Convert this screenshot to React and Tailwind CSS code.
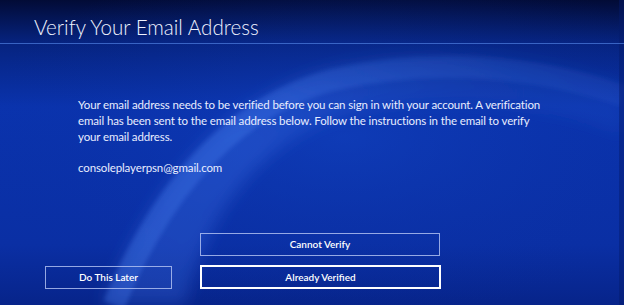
export default function App() {
  return (
    <div className="relative w-[624px] h-[305px] overflow-hidden bg-[#0a2c9e] text-white font-['Lato',_'Liberation_Sans',_sans-serif]">
      <svg className="absolute inset-0 w-full h-full" viewBox="0 0 624 305" preserveAspectRatio="none">
        <defs>
          <linearGradient id="bg" x1="0" y1="0" x2="0" y2="1">
            <stop offset="0" stopColor="#020b36" />
            <stop offset="0.14" stopColor="#06237f" />
            <stop offset="0.35" stopColor="#0a33ad" />
            <stop offset="0.8" stopColor="#0a2fa4" />
            <stop offset="1" stopColor="#07248a" />
          </linearGradient>
          <radialGradient id="glow" cx="0.55" cy="0.45" r="0.6">
            <stop offset="0" stopColor="#1446c4" stopOpacity="0.45" />
            <stop offset="1" stopColor="#0a2c9e" stopOpacity="0" />
          </radialGradient>
          <linearGradient id="band" x1="0" y1="1" x2="1" y2="0">
            <stop offset="0" stopColor="#3f75ea" stopOpacity="0.28" />
            <stop offset="0.45" stopColor="#3d72ea" stopOpacity="0.34" />
            <stop offset="1" stopColor="#3a6fe0" stopOpacity="0.05" />
          </linearGradient>
          <linearGradient id="strip" x1="0" y1="1" x2="1" y2="0">
            <stop offset="0" stopColor="#4a80f0" stopOpacity="0.3" />
            <stop offset="0.5" stopColor="#4a80f0" stopOpacity="0.32" />
            <stop offset="1" stopColor="#4a80f0" stopOpacity="0.08" />
          </linearGradient>
          <filter id="soft" x="-10%" y="-10%" width="120%" height="120%">
            <feGaussianBlur stdDeviation="8" />
          </filter>
          <filter id="edge" x="-10%" y="-10%" width="120%" height="120%">
            <feGaussianBlur stdDeviation="2" />
          </filter>
        </defs>
        <rect width="624" height="305" fill="url(#bg)" />
        <rect width="624" height="305" fill="url(#glow)" />
        <path
          d="M102 305 C 145 200, 215 100, 330 68 C 430 45, 540 55, 624 85 L 624 135 C 540 100, 440 95, 360 110 C 260 135, 205 215, 185 305 Z"
          fill="url(#band)"
          filter="url(#soft)"
        />
        <path
          d="M114 305 C 155 205, 222 110, 332 80 C 430 57, 540 66, 624 96"
          fill="none"
          stroke="url(#strip)"
          strokeWidth="22"
          filter="url(#edge)"
        />
        <rect x="619" y="0" width="5" height="305" fill="#041a6a" fillOpacity="0.45" />
      </svg>

      <div className="relative flex flex-col h-full">
        <div className="h-[44px] border-b border-[#4f7fe0]/70 pl-[34px] pt-[14px]">
          <h1 className="text-[20.6px] leading-[26px] font-light text-[#eef2ff]">
            Verify Your Email Address
          </h1>
        </div>

        <div className="pl-[78px] pr-[82px] pt-[53px] text-[11.5px] leading-[16px] tracking-[-0.13px] text-[#e8edff]">
          <p>
            Your email address needs to be verified before you can sign in with your account. A verification
            email has been sent to the email address below. Follow the instructions in the email to verify
            your email address.
          </p>
          <p className="mt-[15px]">consoleplayerpsn@gmail.com</p>
        </div>

        <div className="mt-auto mb-[16px] flex items-end pl-[45px] gap-[28px] text-[10px] font-semibold">
          <button className="w-[127px] h-[23px] border border-[#b9c8f5]/80 flex items-center justify-center">
            Do This Later
          </button>
          <div className="flex flex-col gap-[9px]">
            <button className="w-[240px] h-[23px] border border-[#b9c8f5]/80 flex items-center justify-center">
              Cannot Verify
            </button>
            <button className="w-[241px] h-[24px] border-2 border-white flex items-center justify-center">
              Already Verified
            </button>
          </div>
        </div>
      </div>
    </div>
  );
}
